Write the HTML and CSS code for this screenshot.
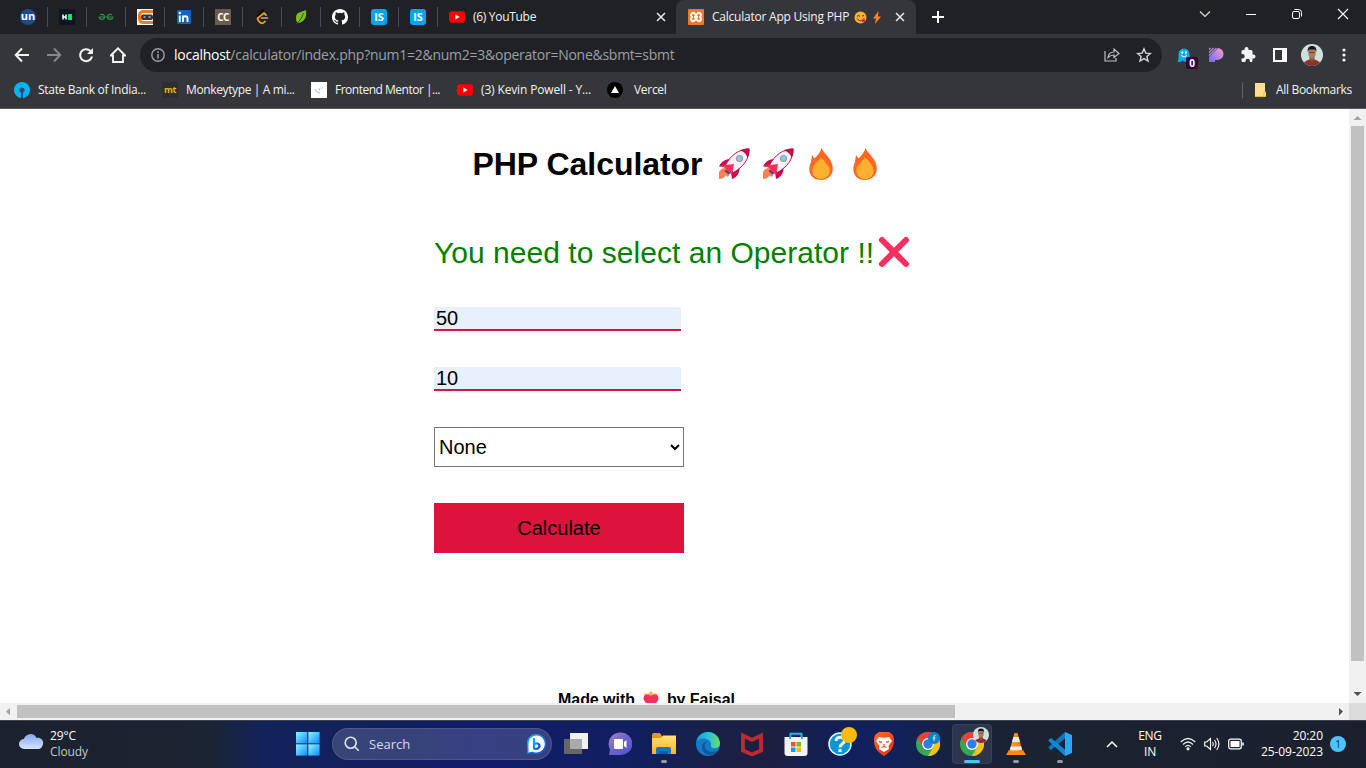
FILE: index.html
```html
<!DOCTYPE html>
<html lang="en">
<head>
<meta charset="utf-8">
<title>Calculator App Using PHP</title>
<link rel="stylesheet" href="styles.css">
</head>
<body>
<svg class="defs" width="0" height="0">
  <defs>
    <linearGradient id="gWin" x1="0" y1="0" x2="1" y2="1"><stop offset="0" stop-color="#8df4ff"/><stop offset="1" stop-color="#0a8dff"/></linearGradient>
    <linearGradient id="gCloud" x1="0" y1="0" x2="0" y2="1"><stop offset="0" stop-color="#7fa8f0"/><stop offset="1" stop-color="#d5e4fb"/></linearGradient>
    <linearGradient id="gPix" x1="0" y1="1" x2="1" y2="0"><stop offset="0" stop-color="#6b6cff"/><stop offset="1" stop-color="#ff9ecb"/></linearGradient>
    <linearGradient id="gFold" x1="0" y1="0" x2="0" y2="1"><stop offset="0" stop-color="#ffe07a"/><stop offset="1" stop-color="#fbb81c"/></linearGradient>
    <linearGradient id="gEdge" x1="0" y1="0" x2="1" y2="0"><stop offset="0" stop-color="#1b9de2"/><stop offset=".55" stop-color="#2fc2d2"/><stop offset="1" stop-color="#6be05a"/></linearGradient>
    <linearGradient id="gChat" x1="0" y1="0" x2="1" y2="1"><stop offset="0" stop-color="#a487c4"/><stop offset=".5" stop-color="#6f62c8"/><stop offset="1" stop-color="#4c52d0"/></linearGradient>
    <linearGradient id="gBrave" x1="0" y1="0" x2="1" y2="1"><stop offset="0" stop-color="#ff6a2a"/><stop offset="1" stop-color="#f02b10"/></linearGradient>
    <linearGradient id="gBing" x1="0" y1="0" x2="1" y2="1"><stop offset="0" stop-color="#19b6f5"/><stop offset="1" stop-color="#1746d8"/></linearGradient>
    <linearGradient id="gCone" x1="0" y1="0" x2="1" y2="0"><stop offset="0" stop-color="#ffa63a"/><stop offset="1" stop-color="#f07800"/></linearGradient>
    <symbol id="youtube" viewBox="0 0 16 16"><rect y="2.300" width="16" height="11.400" rx="2.800" fill="#f00"/><path d="M6.300 5.500v5L10.700 8z" fill="#fff"/></symbol>
    <symbol id="close" viewBox="0 0 12 12"><path d="M2 2l8 8M10 2l-8 8" stroke="#e8eaed" stroke-width="1.500"/></symbol>
    <symbol id="rocket" viewBox="0 0 32 32">
      <path d="M1 24q2-4 6-4l5 4q0 4-3 5 0-2-2-1-1 3-6 3v-3z" fill="#ff8257"/>
      <path d="M1 18.500c2-5 7-8 12.500-7.500L8 19zM14 31c5-2 8-6 7.500-12L13 24z" fill="#ca0b4a"/>
      <path d="M31 1c.5 10-6 18-15.500 23.500L7.500 17C13 7 21 1 31 1z" fill="#f4f4f4" stroke="#ca0b4a"/>
      <path d="M22 2.500C25 1 28 .5 31.500.5c.2 3.500-.5 6.500-2 9.500-1-4-3.500-6.500-7.500-7.500z" fill="#ca0b4a"/>
      <path d="M4 17.500l12-1.500-2 11-3-2.500L8 21z" fill="#ff2e5f"/><path d="M8 21.500l4 3.500-1.500 1.500-4-3.500z" fill="#553986"/>
      <circle cx="21.500" cy="10.500" r="3" fill="#83cbff" stroke="#9b9b9b" stroke-width="1.200"/>
    </symbol>
    <symbol id="fire" viewBox="0 0 24 32">
      <path d="M12.500 0c1.500 4 5.500 7 8.500 11.500 6 10 2 20-9 20.500C1 32-2 22 2 14L3 7l2.500 3.500C9 7 11.500 4 12.500 0z" fill="#ff6723"/>
      <path d="M12 9.500c3 3 9 8 8.700 14-.5 5-4.700 7.500-8.700 7.500s-8.200-2.500-8.700-7.500c-.3-6 5.700-10 8.700-14z" fill="#ffb02e"/>
    </symbol>
    <symbol id="chrome" viewBox="0 0 24 24">
      <circle cx="12" cy="12" r="12" fill="#34a853"/>
      <path d="M1.600 6A12 12 0 0 1 22.400 6H12l-5.200 9z" fill="#ea4335"/>
      <path d="M22.400 6A12 12 0 0 1 12 24l5.200-9L12 6z" fill="#fbc116"/>
      <circle cx="12" cy="12" r="6" fill="#fff"/><circle cx="12" cy="12" r="4.700" fill="#2f7ded"/>
    </symbol>
    <symbol id="face" viewBox="0 0 22 22">
      <clipPath id="fc"><circle cx="11" cy="11" r="11"/></clipPath>
      <g clip-path="url(#fc)"><rect width="22" height="22" fill="#cfe0df"/><path d="M2 22c0-5 5-6 9-7 4 1 9 2 9 7z" fill="#8d2f2c"/><path d="M8.500 12h5v4L11 18l-2.500-2z" fill="#80563e"/><ellipse cx="11" cy="9" rx="3.800" ry="5.500" fill="#a87a60"/><path d="M6.800 8C6.300 4 8 2 11 2s5 2 4.200 6L14 5.500H8z" fill="#171616"/><path d="M8.500 8.500h5" stroke="#4a342a" stroke-width=".8"/></g>
    </symbol>
  </defs>
</svg>
<div class="screen">
  <header class="tabs">
    <div class="pins">
      <div class="pin"><svg width="16" height="16"><circle cx="8" cy="8" r="8" fill="#1b4a8c"/></svg><b class="over un">un</b></div>
      <div class="pin"><svg width="16" height="16"><rect width="16" height="16" fill="#0c1523"/><path d="M4 5.500v5M7 5.500v5M4 8h3" stroke="#fff" stroke-width="1.500" fill="none"/><path d="M9 5h4v6H9z" fill="#00ea64"/></svg></div>
      <div class="pin"><svg width="16" height="16" fill="none" stroke="#2f8d46" stroke-width="1.200"><path d="M2 5.700c2.500-1 4.500 0 4.500 2.300 0 3-5 3.200-5.300 0h13.600c-.3 3.200-5.300 3-5.300 0 0-2.300 2-3.300 4.500-2.300"/></svg></div>
      <div class="pin"><svg width="16" height="16"><rect width="16" height="16" fill="#fff"/><path d="M16 1v3H6q-2 0-2 2v4q0 2 2 2h10v3H6C2 15 1 12 1 8s1-7 5-7z" fill="#f4791f"/><rect x="4" y="5.500" width="12" height="5.500" rx="2" fill="#343434"/><path d="M6.500 8h2M11.500 8h2" stroke="#fff"/></svg></div>
      <div class="pin"><svg width="16" height="16"><rect x="1" y="1" width="14" height="14" rx="1" fill="#0a66c2"/><path d="M3.800 6.500V13M7 13V6.500M7 13V9.500c0-3 4.500-3 4.500 0V13" stroke="#fff" stroke-width="1.900" fill="none"/><circle cx="3.800" cy="4" r="1.200" fill="#fff"/></svg></div>
      <div class="pin"><svg width="16" height="16"><rect width="16" height="16" fill="#6e5b4d"/></svg><b class="over cc">CC</b></div>
      <div class="pin"><svg width="16" height="16" fill="none" stroke-width="1.700" stroke-linecap="round"><path d="M9 1L3.500 6.800" stroke="#050505"/><path d="M12 6L10 4.200 4 8.800c-1 1 0 2.500 1 3.500l1.500 1.500c1.500 1 3 .5 4.500-1.300" stroke="#ffa116"/><path d="M7.500 9h6" stroke="#b3b3b3"/></svg></div>
      <div class="pin"><svg width="16" height="16"><path d="M13 1C8 3 2 3 3 10c0 2 1 3 2 4 7-1 9-6 8-13z" fill="#77bc1f"/><path d="M10.500 4C9 9 7 11 3.500 15" stroke="#2b5c15" fill="none"/></svg></div>
      <div class="pin"><svg width="16" height="16"><path fill="#fff" d="M8 0C3.580 0 0 3.580 0 8c0 3.540 2.290 6.530 5.470 7.590.4.070.55-.17.55-.38v-1.490c-2.010.37-2.530-.49-2.690-.94-.09-.23-.48-.94-.82-1.130-.28-.15-.68-.52-.01-.53.630-.01 1.080.58 1.230.82.720 1.210 1.870.87 2.330.66.070-.52.280-.87.510-1.070-1.780-.2-3.640-.89-3.640-3.950 0-.87.310-1.590.82-2.150-.08-.2-.36-1.020.08-2.120 0 0 .67-.21 2.200.82a7.600 7.600 0 0 1 4 0c1.530-1.040 2.200-.82 2.200-.82.440 1.100.16 1.920.08 2.120.51.560.82 1.270.82 2.150 0 3.070-1.870 3.750-3.650 3.950.29.250.54.730.54 1.480v2.190c0 .21.150.46.550.38A8 8 0 0 0 16 8c0-4.420-3.580-8-8-8z"/></svg></div>
      <div class="pin"><i class="is">IS</i></div>
      <div class="pin"><i class="is">IS</i></div>
    </div>
    <div class="tab"><svg width="16" height="16"><use href="#youtube"/></svg><span class="ttl yt">(6) YouTube</span><svg class="x" width="12" height="12"><use href="#close"/></svg></div>
    <div class="tab on">
      <svg width="16" height="16"><rect width="16" height="16" rx="1" fill="#f37726"/><path d="M4.500 4C7 3 7 6 8 6s1-3 3.500-2 1.500 3 .5 4c1 1 2 3-.5 4S9 10 8 10s-1 3-3.500 2-1.500-3-.5-4c-1-1-2-3 .5-4zM6 8h4" stroke="#fff" stroke-width="1.900" fill="none"/></svg>
      <span class="ttl app">Calculator App Using PHP</span>
      <svg class="emo" width="13" height="13"><circle cx="6.500" cy="6.500" r="6" fill="#ffb02e"/><path d="M3 5.500l1.500-1L6 5.500M8 5l2-.5M3 7.500c2 3 5 3 7 0" stroke="#5b2c16" fill="none"/><path d="M7.500 9l2.500-1.500 1.500 2C11 11.500 8.500 12 8 10.500z" fill="#e01e78"/></svg>
      <svg class="bolt" width="10" height="13"><path d="M6.500 0L1 7.500h3L3 13 9 5.500H6z" fill="#ff822d"/></svg>
      <svg class="x" width="12" height="12"><use href="#close"/></svg>
    </div>
    <svg class="plus" width="14" height="14"><path d="M7 1v12M1 7h12" stroke="#fff" stroke-width="2"/></svg>
    <div class="winctl">
      <svg width="12" height="12"><path d="M1 3.500l5 5 5-5" fill="none" stroke="#ddd" stroke-width="1.200"/></svg>
      <svg width="12" height="12"><path d="M1 6.500h10" stroke="#fff"/></svg>
      <svg width="12" height="12"><path d="M3.500 1.500h4q3 0 3 3v4" fill="none" stroke="#fff"/><rect x="1.500" y="3.500" width="7" height="7" rx="1.500" fill="none" stroke="#fff"/></svg>
      <svg width="12" height="12"><path d="M1 1l10 10M11 1L1 11" stroke="#fff" stroke-width="1.100"/></svg>
    </div>
  </header>
  <div class="toolbar">
    <svg width="16" height="16" fill="none" stroke="#f1f3f4" stroke-width="1.900"><path d="M15 8H2M8 1.500L1.700 8 8 14.500"/></svg>
    <svg width="16" height="16" fill="none" stroke="#85878a" stroke-width="1.900"><path d="M1 8h13M8 1.500L14.300 8 8 14.500"/></svg>
    <svg width="16" height="16"><path d="M12.500 4A6 6 0 1 0 14 9.500" fill="none" stroke="#f1f3f4" stroke-width="2"/><path d="M15 1v6H9z" fill="#f1f3f4"/></svg>
    <svg width="16" height="16" fill="none" stroke="#f1f3f4" stroke-width="1.900"><path d="M.8 8.500L8 1.300l7.200 7.200H13V15H3V8.500z"/></svg>
    <div class="omni">
      <svg width="14" height="14"><circle cx="7" cy="7" r="6.200" fill="none" stroke="#9aa0a6" stroke-width="1.400"/><path d="M7 6v4.500M7 3.300v1.600" stroke="#9aa0a6" stroke-width="1.500"/></svg>
      <span class="url"><em>localhost</em>/calculator/index.php?num1=2&amp;num2=3&amp;operator=None&amp;sbmt=sbmt</span>
      <svg class="share" width="16" height="16" fill="none" stroke="#bdc1c6" stroke-width="1.200"><path d="M1 4v10h11v-3M4 10.500c.5-3.500 3-5.500 6-5.500V2l5 4.500-5 4V8C7 8 5.500 9 4 10.500z"/></svg>
      <svg width="16" height="16" fill="none" stroke="#d2d5d9" stroke-width="1.400"><path d="M8 1.800l1.800 4.300 4.600.4-3.500 3 1.100 4.500L8 11.600 4 14l1.100-4.500-3.500-3 4.600-.4z"/></svg>
    </div>
    <div class="exts">
      <div class="ext ghost"><svg width="14" height="16"><path d="M1.500 7a5.500 5.500 0 0 1 11 0v7l-2-1-2.500 2-2.500-1.500L3 15H.5q1-2 1-4z" fill="#00aef0"/><ellipse cx="5.300" cy="5.500" rx="1" ry="1.500" fill="#fff"/><ellipse cx="8.800" cy="5.500" rx="1" ry="1.500" fill="#fff"/><path d="M4 8.500q3 3 6 0" stroke="#fff" fill="none"/></svg><b class="count">0</b></div>
      <div class="ext"><svg width="16" height="16"><path d="M1 10L10 1a6 6 0 0 1-1 12H7v2H1z" fill="url(#gPix)"/><path d="M1 2.500L2.500 1M1 5.500L5.500 1M1 8.500L8.500 1" stroke="#b98be6" stroke-width="1.200"/></svg></div>
      <div class="ext"><svg width="16" height="16"><path fill="#f1f3f4" d="M13.500 7.500h-1v-3q0-1.500-1.500-1.500H8.500V2a2 2 0 0 0-4 0v1H3Q1.500 3 1.500 4.500V7h1a2.200 2.200 0 0 1 0 4.400h-1v2.100Q1.500 15 3 15h2.500v-1a2.200 2.200 0 0 1 4.400 0v1H11q1.500 0 1.500-1.500v-2h1a2 2 0 0 0 0-4z"/></svg></div>
      <div class="ext"><svg width="14" height="14"><rect x="1" y="1" width="12" height="12" fill="none" stroke="#fff" stroke-width="2"/><path d="M9 1h4v12H9z" fill="#fff"/></svg></div>
      <div class="ext"><svg width="22" height="22"><use href="#face"/></svg></div>
      <div class="ext"><svg width="4" height="16" fill="#f1f3f4"><circle cx="2" cy="3" r="1.600"/><circle cx="2" cy="8" r="1.600"/><circle cx="2" cy="13" r="1.600"/></svg></div>
    </div>
  </div>
  <nav class="marks">
    <div class="mark m1"><svg width="16" height="16"><circle cx="8" cy="8" r="8" fill="#00b5ef"/><circle cx="8" cy="8" r="2.600" fill="#2b4a78"/><path d="M8 8v8" stroke="#2b4a78" stroke-width="2"/></svg><span>State Bank of India...</span></div>
    <div class="mark m2"><i class="mt">mt</i><span>Monkeytype | A mi...</span></div>
    <div class="mark m3"><svg width="16" height="16"><rect width="16" height="16" fill="#fff"/><path d="M4 7q1 4 5 4M8 6l1 3M12 5l-2 2" stroke="#a9bfda" fill="none"/></svg><span>Frontend Mentor |...</span></div>
    <div class="mark m4"><svg width="16" height="16"><use href="#youtube"/></svg><span>(3) Kevin Powell - Y...</span></div>
    <div class="mark m5"><svg width="16" height="16"><circle cx="8" cy="8" r="8" fill="#000"/><path d="M8 4l4 7H4z" fill="#fff"/></svg><span>Vercel</span></div>
    <div class="mark all"><svg width="13" height="16"><path d="M1 1h10v9h1v5H1z" fill="#ffe08a"/><path d="M1 14.500h11M10 14v-4h2" stroke="#e6b93c" fill="none"/></svg><span>All Bookmarks</span></div>
  </nav>
  <div class="view">
    <main class="page">
      <h1><span>PHP Calculator</span><svg width="32" height="32"><use href="#rocket"/></svg><svg width="32" height="32"><use href="#rocket"/></svg><svg class="f" width="24" height="32"><use href="#fire"/></svg><svg class="f" width="24" height="32"><use href="#fire"/></svg></h1>
      <p class="msg"><span>You need to select an Operator !!</span><svg width="32" height="32"><path d="M4 4l24 24M28 4L4 28" stroke="#f92f60" stroke-width="6" stroke-linecap="round"/></svg></p>
      <form class="calc">
        <input class="num" type="text" value="50">
        <input class="num" type="text" value="10">
        <select class="op"><option>None</option></select>
        <button class="go" type="button">Calculate</button>
      </form>
      <footer class="made"><span>Made with</span><svg width="16" height="16"><path d="M1 4l2-2 2 1 3-3 3 3 2-1 2 2v3H1z" fill="#f9b83c"/><path d="M8 15C3 13 .5 10 .5 7Q1 3.500 4.500 3.500 7 3.500 8 5q1-1.500 3.500-1.500Q15 3.500 15.500 7c0 3-2.500 6-7.500 8z" fill="#f92f60"/></svg><span>by Faisal</span></footer>
    </main>
    <div class="vbar"><svg width="17" height="17"><path d="M4.500 11l4-4 4 4z" fill="#a3a3a3"/></svg><i></i><svg width="17" height="17"><path d="M4.500 6l4 4 4-4z" fill="#505050"/></svg></div>
  </div>
  <div class="hbar"><svg width="17" height="17"><path d="M10 5L6 8.500l4 4z" fill="#a3a3a3"/></svg><i></i><svg class="r" width="17" height="17"><path d="M7 5l4 3.500-4 4z" fill="#505050"/></svg><b></b></div>
  <div class="task">
    <div class="weather"><svg width="26" height="18"><path d="M6 17a5 5 0 0 1 0-10C7 2 16-1 18.500 6 23 5 26 9 25 12q-1 5-5 5z" fill="url(#gCloud)"/></svg><div><p class="w1">29°C</p><p class="w2">Cloudy</p></div></div>
    <svg class="start" width="24" height="24" fill="url(#gWin)"><rect x="0" y="0" width="11.300" height="11.300"/><rect x="12.300" y="0" width="11.300" height="11.300"/><rect x="0" y="12.300" width="11.300" height="11.300"/><rect x="12.300" y="12.300" width="11.300" height="11.300"/></svg>
    <div class="search"><svg width="16" height="16" fill="none" stroke="#e3e6ef" stroke-width="1.600"><circle cx="6.700" cy="6.700" r="5.500"/><path d="M10.700 10.700l4 4"/></svg><span>Search</span><svg class="bing" width="20" height="20"><path d="M10 0a10 10 0 1 1-4 19l-5 1V10A9 9 0 0 1 10 0z" fill="url(#gBing)"/><path d="M10.300 1.500a8.500 8.500 0 1 1-4 16l-3.800 1V10a8 8 0 0 1 7.800-8.500z" fill="#fff"/><path d="M8 4v10.500c4 1.500 7-2 4.500-4.500-1-1-2.500-.8-4-.2" fill="none" stroke="url(#gBing)" stroke-width="2.300"/></svg></div>
    <div class="apps">
      <div class="ap"><svg width="24" height="24"><rect x="6" y="1" width="18" height="16" fill="#f0f0f0"/><rect x="0" y="7" width="18" height="15" fill="#666"/><rect x="6" y="7" width="12" height="10" fill="#aaa"/></svg></div>
      <div class="ap"><svg width="24" height="24"><path d="M12 .5a11.300 11.300 0 1 1 0 22.500H1l1-5.500A11.500 11.500 0 0 1 12 .5z" fill="url(#gChat)"/><rect x="6" y="7" width="9" height="10" rx="1" fill="#fff"/><path d="M16 10l2.500-2v8L16 14z" fill="#fff"/></svg></div>
      <div class="ap run"><svg width="24" height="24"><path d="M0 3q0-2 2-2h6l2 3v3H0z" fill="#dd9b08"/><path d="M0 6h9l2-2.500h13V22H0z" fill="url(#gFold)"/><path d="M4 22v-5q0-2 2-2h11q2 0 2 2v5z" fill="#1177c8"/><path d="M7 19h9v3H7z" fill="#0c5ca7"/></svg></div>
      <div class="ap"><svg width="24" height="24"><circle cx="12" cy="12" r="12" fill="#147bc7"/><path d="M.5 9C4-3 21-3 23.800 10c.7 5-2.800 7-6.800 6-3-1-2-2-2-4 0-5-9-8-14.500-3z" fill="url(#gEdge)"/><path d="M9 12c-2 6 5 9.500 12.500 7C15 27 5 22 6 14q.5-4 6-5-2 1-3 3z" fill="#14549d"/></svg></div>
      <div class="ap"><svg width="24" height="24"><path d="M3 3.500l9 4.500 9-4.500v15l-9 4-9-4z" fill="none" stroke="#bd2a33" stroke-width="3.800"/></svg></div>
      <div class="ap"><svg width="24" height="24"><path d="M6.500 7V1.700h11V7" fill="none" stroke="#27b1f4" stroke-width="2"/><path d="M.5 5h23v16q0 3-3 3h-17q-3 0-3-3z" fill="#f4f4f4"/><path d="M6 7V5M18 7V5" stroke="#27b1f4" stroke-width="2"/><path d="M7 10h4.500v4.500H7z" fill="#f25022"/><path d="M12.500 10H17v4.500h-4.500z" fill="#7fba00"/><path d="M7 15.500h4.500V20H7z" fill="#00a4ef"/><path d="M12.500 15.500H17V20h-4.500z" fill="#ffb900"/></svg></div>
      <div class="ap"><svg width="24" height="24"><circle cx="12" cy="12" r="11" fill="#0596d7" stroke="#e8f7ff" stroke-width="1.500"/><path d="M8 9c0-5 8.500-5 8.500-.5C16.500 12 12 11.500 12 15.500M12 17v3" fill="none" stroke="#fff" stroke-width="3"/></svg><i class="dot"></i></div>
      <div class="ap"><svg width="24" height="24"><path d="M7 0h10l4 3 1 4c0 8-2 12-10 17C4 19 2 15 2 7l1-4z" fill="url(#gBrave)"/><path d="M7 5l5 .7L17 5l3 4-3.500 5 .5 3-5 3-5-3 .5-3L4 9z" fill="#fff"/><path d="M7 9.500l3 .8M17 9.500l-3 .8M12 12v2.500M9.500 15.500l2.500-1 2.500 1" fill="none" stroke="#f04a23" stroke-width="1.300"/></svg></div>
      <div class="ap"><svg width="24" height="24"><use href="#chrome"/><circle cx="18" cy="6" r="6" fill="#0d84c9"/><path d="M18 9V5q0-2 1.500-1.500M16.800 6h2.500" stroke="#d8f1ff" fill="none"/></svg></div>
      <div class="ap cur"><svg width="24" height="24"><use href="#chrome"/></svg><svg class="av" width="16" height="16"><use href="#face"/></svg></div>
      <div class="ap run"><svg width="24" height="24"><path d="M5 18h14l3 5H2z" fill="#f58a1c"/><path d="M10.500 1h3l5 18q-6.500 2-13 0z" fill="url(#gCone)"/><path d="M9.400 5h5.200l1.400 5H8zM6.800 14.500h10.400l.9 3q-6 2-12.200 0z" fill="#eee"/></svg></div>
      <div class="ap run"><svg width="24" height="24"><path d="M17 0l7 3v18l-7 3z" fill="#2da7f4"/><path d="M17 0v6.500L3 18 .5 16v-1z" fill="#0d77bd"/><path d="M3 6l14 11.500V24L.5 9V8z" fill="#1286d3"/></svg></div>
    </div>
    <div class="tray">
      <svg width="12" height="12"><path d="M1 9l5-5 5 5" fill="none" stroke="#fff" stroke-width="1.500"/></svg>
      <div class="lang"><p>ENG</p><p>IN</p></div>
      <svg class="wifi" width="16" height="14" fill="none" stroke="#e8eaef" stroke-width="1.200"><path d="M.7 5q7.300-7 14.600 0M3 7.500q5-5 10 0M5.200 9.800q2.800-2.800 5.600 0"/><circle cx="8" cy="11.800" r="1" fill="#fff"/></svg>
      <svg width="16" height="14" fill="none" stroke="#fff" stroke-width="1.100"><path d="M.7 5v4h2L6.500 12.500v-11L2.700 5zM8.500 5q1.500 2 0 4M10.500 3q3 4 0 8M12.700 1q4.500 6 0 12"/></svg>
      <svg width="16" height="12"><rect x=".7" y="1.200" width="12.600" height="9.600" rx="2" fill="none" stroke="#fff" stroke-width="1.200"/><rect x="2.500" y="3" width="9" height="6" fill="#fff"/><path d="M15 4.500v3" stroke="#fff" stroke-width="1.500"/></svg>
      <div class="clock"><p class="t">20:20</p><p class="d">25-09-2023</p></div>
      <i class="note">1</i>
    </div>
  </div>
</div>
</body>
</html>
```
FILE: styles.css
```css
* { box-sizing: border-box; }
body { margin: 0; background: #fff; font-family: "Open Sans", "Noto Sans", sans-serif; }
p, h1 { margin: 0; }
i, em { font-style: normal; }
svg { display: block; flex: none; }
.defs { position: absolute; }
.screen { width: 1366px; height: 768px; overflow: hidden; display: flex; flex-direction: column; }

/* tab strip */
.tabs { height: 34px; background: #202124; display: flex; flex: none; padding-left: 9px; color: #f1f3f4; font-size: 12px; }
.pins { display: flex; align-items: center; }
.pin { width: 39px; height: 20px; border-right: 1px solid #4a4c50; display: flex; align-items: center; justify-content: center; position: relative; margin-top: -1px; }
.over { position: absolute; color: #fff; }
.un { font-size: 11px; line-height: 14px; top: 2px; }
.cc { font-size: 10px; line-height: 14px; top: 3px; letter-spacing: -.5px; }
.is { width: 16px; height: 16px; border-radius: 3px; background: #00a4f0; color: #fff; font-weight: 700; font-size: 11px; line-height: 16px; text-align: center; }
.tab { width: 238px; display: flex; align-items: center; padding: 0 9px 0 11px; }
.tab.on { width: 240px; background: #35363a; border-radius: 8px 8px 0 0; padding: 0 10px 0 12px; }
.ttl { margin-left: 8px; line-height: 16px; white-space: nowrap; }
.yt { letter-spacing: -.3px; }
.app { letter-spacing: -.23px; width: 137px; }
.emo { margin-left: 5px; }
.bolt { margin-left: 5px; }
.x { margin-left: auto; }
.plus { margin: 10px 0 0 15px; }
.winctl { margin: 8px 17px 0 auto; display: flex; gap: 34px; }

/* toolbar */
.toolbar { height: 42px; background: #35363a; flex: none; display: flex; align-items: center; padding: 0 6px 0 14px; gap: 16px; }
.omni { width: 1022px; height: 34px; border-radius: 17px; background: #202124; margin-left: -2px; display: flex; align-items: center; padding: 0 10px 0 11px; flex: none; }
.url { margin-left: 9px; font-size: 14px; color: #9aa0a6; letter-spacing: -.26px; white-space: nowrap; margin-top: -1px; }
.url em { color: #fff; }
.share { margin: 0 16px 0 auto; }
.exts { display: flex; align-items: center; margin-left: -10px; }
.ext { width: 32px; display: flex; justify-content: center; align-items: center; position: relative; }
.count { position: absolute; left: 18px; top: 10px; width: 12px; height: 12px; border-radius: 2px; background: #330033; color: #fff; font-size: 10px; line-height: 12px; text-align: center; }

/* bookmarks bar */
.marks { height: 33px; background: #35363a; border-bottom: 1px solid #5b5560; flex: none; display: flex; align-items: center; padding: 0 14px 4px; color: #f1f3f4; font-size: 12px; }
.mark { display: flex; align-items: center; gap: 8px; white-space: nowrap; letter-spacing: -.3px; }
.mark span { margin-top: -1px; }
.m1 { width: 148px; }
.m2 { width: 149px; letter-spacing: -.37px; }
.m3 { width: 146px; letter-spacing: -.5px; }
.m4 { width: 150px; letter-spacing: -.15px; }
.m5 { gap: 11px; }
.mt { width: 16px; height: 16px; background: #2c2e31; color: #e2b714; font-size: 9px; font-weight: 700; line-height: 15px; text-align: center; }
.all { margin-left: auto; border-left: 1px solid #5f6165; padding-left: 11px; gap: 9px; }

/* page */
.view { height: 594px; flex: none; display: flex; }
.page { width: 1349px; height: 594px; overflow: hidden; padding: 36px 0 0 434px; font-family: "Liberation Sans", Arial, sans-serif; color: #000; }
h1 { font-size: 32px; line-height: 37px; height: 37px; display: flex; align-items: center; margin-left: 39px; gap: 12px; }
h1 span { width: 233px; white-space: nowrap; padding-top: 1px; margin-left: -.5px; margin-right: .5px; letter-spacing: -.04px; }
h1 .f { margin-left: 3px; margin-right: 5px; }
.msg { color: green; font-size: 30px; line-height: 36px; height: 36px; margin-top: 52px; display: flex; align-items: center; white-space: nowrap; }
.msg span { width: 444px; padding-top: 1px; letter-spacing: .03px; }
.calc { display: flex; flex-direction: column; align-items: flex-start; gap: 36px; margin-top: 37px; }
.num { width: 247px; height: 24px; border: 0; border-bottom: 2px solid #dc143c; background: #e8f0fe; padding: 0 2px; font: 20px "Liberation Sans", Arial, sans-serif; color: #000; outline: 0; }
.op { width: 250px; height: 40px; font: 20px "Liberation Sans", Arial, sans-serif; background: #fff; color: #000; }
.go { width: 250px; height: 50px; border: 0; background: #dc143c; color: #000; font: 20px "Liberation Sans", Arial, sans-serif; }
.made { display: flex; gap: 8px; font-size: 16px; font-weight: 700; line-height: 18px; margin: 138px 0 0 124px; letter-spacing: -.05px; }

/* scrollbars */
.vbar { width: 17px; background: #f1f1f1; display: flex; flex-direction: column; justify-content: space-between; }
.vbar i { width: 13px; height: 535px; background: #c1c1c1; margin: 0 auto auto 2px; }
.hbar { height: 17px; background: #f1f1f1; display: flex; flex: none; align-items: center; }
.hbar i { width: 938px; height: 13px; background: #c1c1c1; }
.hbar .r { margin-left: auto; }
.hbar b { width: 17px; height: 17px; background: #dcdcdc; }

/* taskbar */
.task { height: 48px; flex: none; border-top: 1px solid #3d4252; padding-bottom: 1px; display: flex; align-items: center; color: #fff; background: linear-gradient(90deg, #1c212d 0, #1b2432 210px, #12235a 262px, #10205f 400px, #111c6b 480px, #10205e 640px, #18204a 700px, #1c1f40 770px, #10205c 850px, #11215a 900px, #18223c 960px, #1b2230 1050px, #1b202d 100%); font-size: 12px; }
.weather { display: flex; width: 296px; padding-left: 18px; gap: 6px; }
.weather svg { margin-top: 4px; }
.w1, .w2 { line-height: 16px; letter-spacing: -.1px; }
.w2 { color: #c3c6cd; }
.start { margin-right: 12px; }
.search { width: 220px; height: 32px; border-radius: 16px; background: rgba(255,255,255,.16); border: 1px solid rgba(255,255,255,.12); display: flex; align-items: center; padding: 0 5px 0 11px; gap: 9px; font-size: 13px; color: #d9dcea; }
.bing { margin-left: auto; }
.apps { display: flex; margin-left: 2px; }
.ap { width: 44px; height: 40px; display: flex; align-items: center; justify-content: center; position: relative; }
.run::after, .cur::after { content: ""; position: absolute; bottom: 1px; width: 6px; height: 3px; border-radius: 2px; background: #9599a3; }
.cur { width: 40px; margin: 0 2px; border-radius: 4px; background: rgba(255,255,255,.09); border: 1px solid rgba(255,255,255,.06); }
.cur::after { bottom: 0; width: 16px; background: #4cc2ff; }
.av { position: absolute; right: 2px; top: 2px; }
.dot { position: absolute; left: 23px; top: 3px; width: 16px; height: 16px; border-radius: 50%; background: #ffb90a; }
.tray { display: flex; align-items: center; margin-left: auto; padding-right: 20px; gap: 8px; }
.lang { width: 26px; margin: 0 9px 0 11px; text-align: center; line-height: 16px; letter-spacing: -.3px; }
.clock { width: 71px; text-align: right; line-height: 16px; letter-spacing: -.05px; }
.note { width: 16px; height: 16px; border-radius: 50%; background: #4cc2ff; color: #12303f; font-size: 10px; line-height: 16px; text-align: center; margin-left: -1px; }
```
